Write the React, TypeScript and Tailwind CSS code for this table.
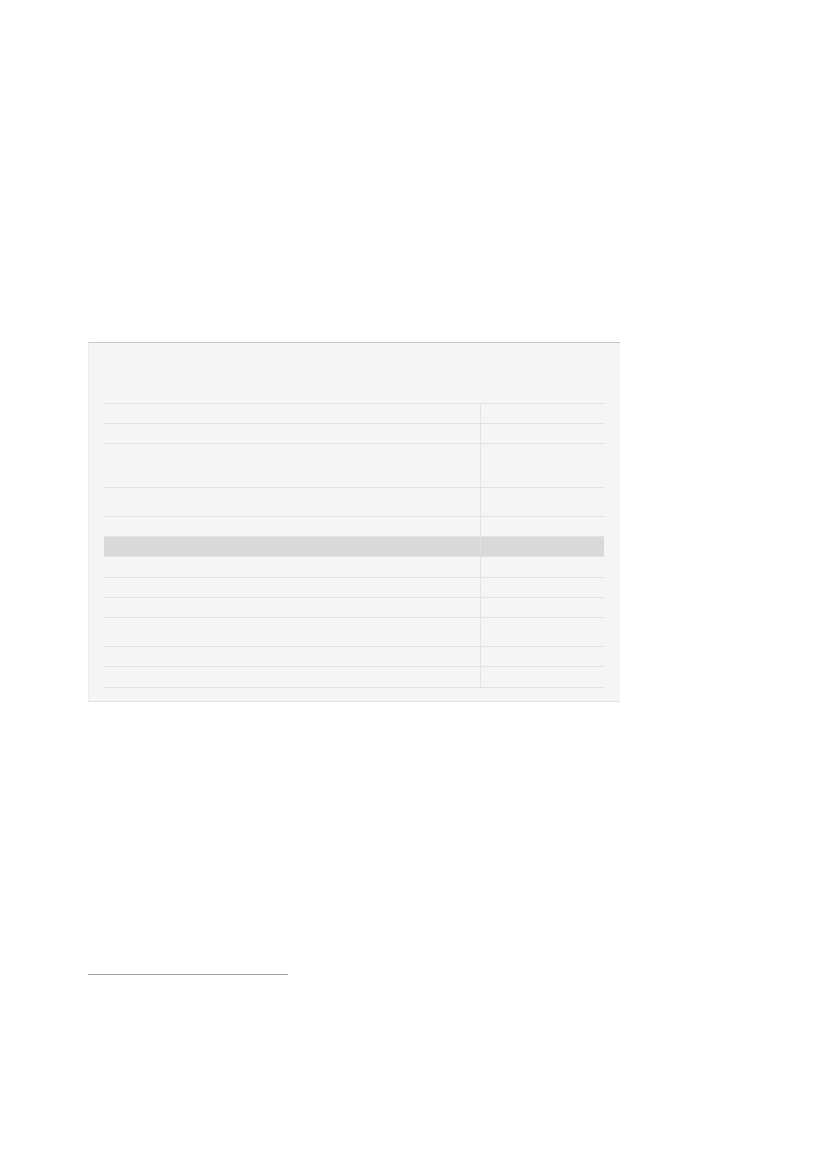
import React from "react";

const rows: { h: string; gray?: boolean }[] = [
  { h: "h-[20px]" },
  { h: "h-[20px]" },
  { h: "h-[44px]" },
  { h: "h-[29px]" },
  { h: "h-[20px]" },
  { h: "h-[20px]", gray: true },
  { h: "h-[21px]" },
  { h: "h-[20px]" },
  { h: "h-[20px]" },
  { h: "h-[29px]" },
  { h: "h-[20px]" },
  { h: "h-[21px]" },
];

export default function App() {
  return (
    <div
      className="min-h-[1170px] w-full bg-white pl-[88px] pt-[342px]"
      style={{ fontFamily: '"Liberation Sans", Arial, sans-serif' }}
    >
      <div className="w-[532px] border-t border-t-[#c6c6c6] border-b border-b-[#e2e2e2] border-l border-l-[#ececec] bg-[#f5f5f5] pl-[15px] pr-[16px] pt-[60px] pb-[13px]">
        <div className="w-[500px] border-t border-t-[#e3e3db]">
          {rows.map((r, i) => (
            <div
              key={i}
              className={`flex ${r.h} border-b border-b-[#e3e3db] ${r.gray ? "bg-[#d9d9d9]" : ""}`}
            >
              <div className="w-[376px]" />
              <div
                className={`flex-1 border-l ${r.gray ? "border-l-[#e0e0dc]" : "border-l-[#e3e3db]"}`}
              />
            </div>
          ))}
        </div>
      </div>
      <div className="mt-[272px] h-px w-[200px] bg-[#a0a0a0]" />
    </div>
  );
}
